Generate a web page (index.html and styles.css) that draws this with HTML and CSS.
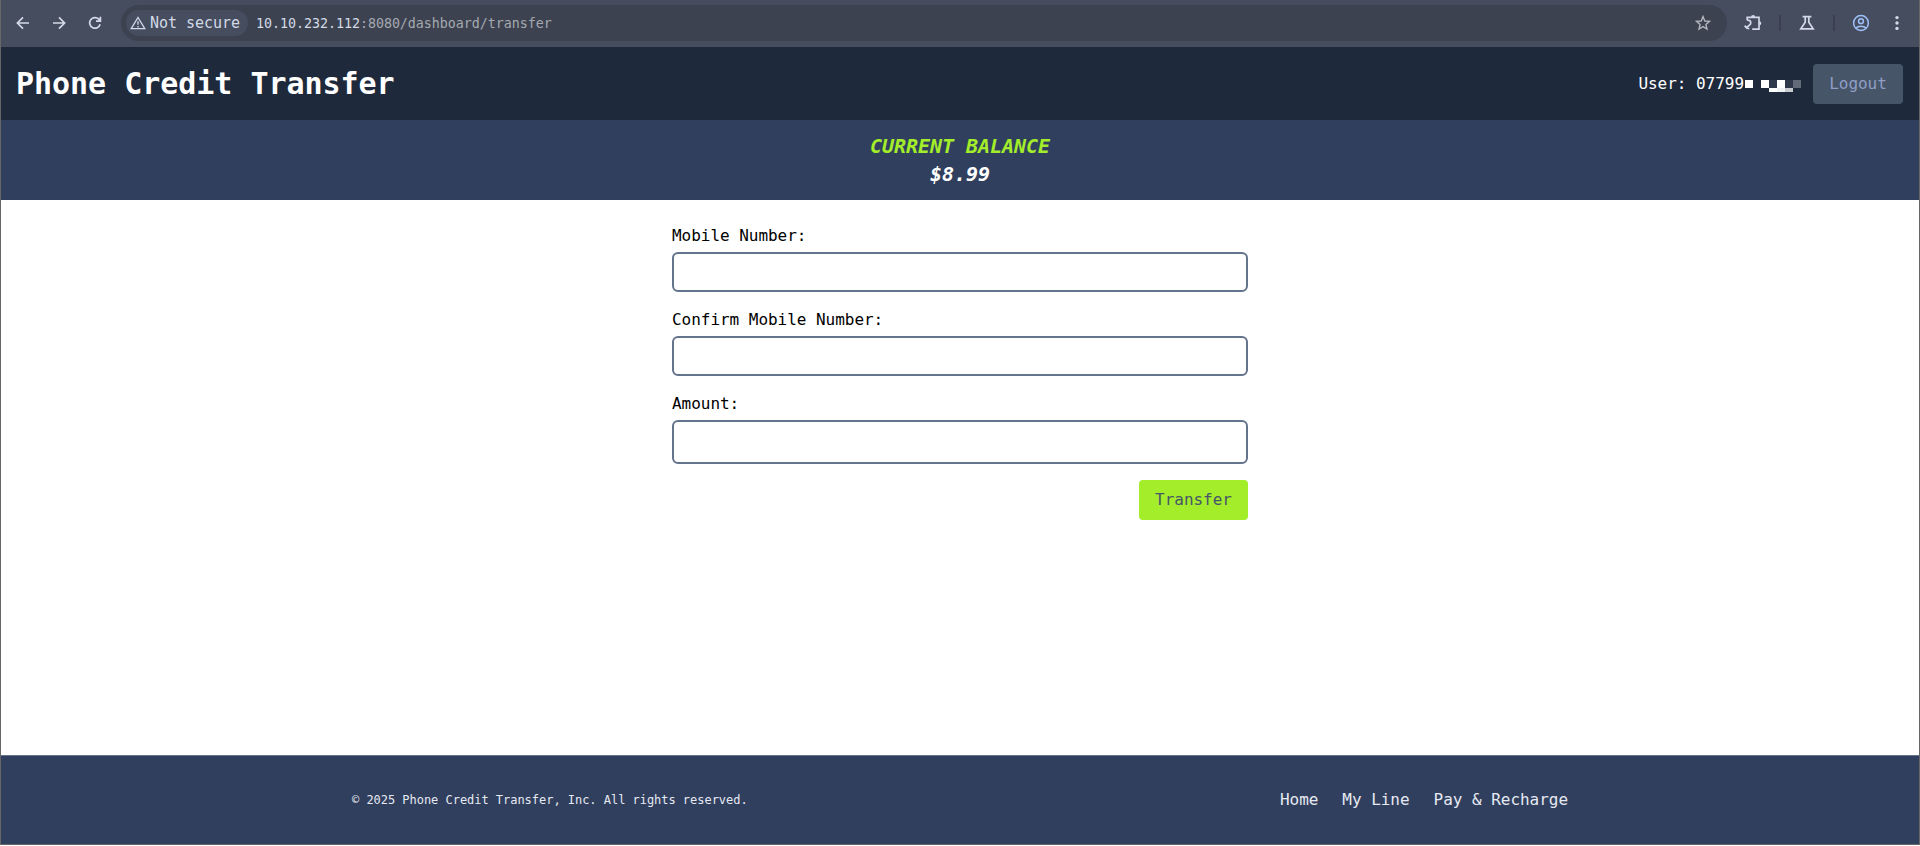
FILE: index.html
```html
<!DOCTYPE html>
<html lang="en">
<head>
<meta charset="utf-8">
<title>Phone Credit Transfer</title>
<link rel="stylesheet" href="styles.css">
</head>
<body>
<div class="window">
  <div class="toolbar">
    <div class="nav-icons">
      <svg class="icon" viewBox="0 0 18 18"><path d="M15 9H3.8M9 3.4 3.4 9 9 14.6"/></svg>
      <svg class="icon" viewBox="0 0 18 18"><path d="M3 9h11.2M9 3.4 14.6 9 9 14.6"/></svg>
      <svg class="icon" viewBox="0 0 18 18"><path d="M14.1 10.2A5.3 5.3 0 1 1 12.8 5.2L14.4 6.8M14.4 2.8V7.2H10"/></svg>
    </div>
    <div class="address">
      <div class="security">
        <svg class="warning" viewBox="0 0 16 14"><path d="M8 1.5 14.8 12.7H1.2Z"/><path d="M8 5.2v3.6M8 10v1.4"/></svg>
        <span>Not secure</span>
      </div>
      <div class="url"><span class="host">10.10.232.112</span>:8080/dashboard/transfer</div>
      <svg class="star" viewBox="0 0 16 16"><path d="M8 1.6 9.8 6l4.7.4-3.6 3.1 1.1 4.6L8 11.6l-4 2.5 1.1-4.6L1.5 6.4 6.2 6Z"/></svg>
    </div>
    <div class="actions">
      <svg class="puzzle" viewBox="0 0 18 18"><path d="M3.2 6.2V3.4H15V15.2H8.2M3.2 6.2C7.2 6.2 7.8 9.4 5.4 11.2L2.6 13.6M.7 11.6l1.9 2.4 2.6.8"/><path class="solid" d="M7 3.2a2.1 2.1 0 0 1 4.2 0ZM15.2 7.2a2.1 2.1 0 0 1 0 4.2Z"/></svg>
      <i class="divider"></i>
      <svg class="flask" viewBox="0 0 16 16"><path d="M3.6 1.7h8.8M6.2 2v5.2L1.8 13.9h12.4L9.8 7.2V2"/></svg>
      <i class="divider"></i>
      <svg class="profile" viewBox="0 0 18 18"><circle cx="9" cy="9" r="7.4"/><circle cx="9" cy="7.2" r="2.4"/><path d="M3.8 14c2.8-2.5 7.6-2.5 10.4 0"/></svg>
      <svg class="dots" viewBox="0 0 4 16"><circle cx="2" cy="2.6" r="1.7"/><circle cx="2" cy="8" r="1.7"/><circle cx="2" cy="13.4" r="1.7"/></svg>
    </div>
  </div>

  <header class="header">
    <h1 class="title">Phone Credit Transfer</h1>
    <div class="account">
      <span>User: 07799</span>
      <svg class="redaction" viewBox="0 0 57 12" shape-rendering="crispEdges"><path fill="#fff" d="M1 0h8v8H1zM17 0h8v8h-8zM33 0h8v8h-8zM25 8h8v4h-8z"/><path fill="#2e384a" d="M25 0h8v8h-8zM41 0h8v8h-8z"/><path fill="#f0f1f2" d="M33 8h8v4h-8z"/><path fill="#c8cbd0" d="M41 8h8v4h-8z"/><path fill="#646b78" d="M49 0h8v8h-8z"/></svg>
      <button class="logout">Logout</button>
    </div>
  </header>

  <section class="balance">
    <div class="balance-label">CURRENT BALANCE</div>
    <div>$8.99</div>
  </section>

  <main class="main">
    <form class="form">
      <label class="field">Mobile Number:<input class="input" type="text"></label>
      <label class="field">Confirm Mobile Number:<input class="input" type="text"></label>
      <label class="field">Amount:<input class="input amount" type="text"></label>
      <button class="submit" type="button">Transfer</button>
    </form>
  </main>

  <footer class="footer">
    <div class="footer-inner">
      <span class="copyright">© 2025 Phone Credit Transfer, Inc. All rights reserved.</span>
      <nav class="links"><a>Home</a><a>My Line</a><a>Pay &amp; Recharge</a></nav>
    </div>
  </footer>
</div>
</body>
</html>
```
FILE: styles.css
```css
* { box-sizing: border-box; }
body {
  margin: 0;
  background: #fff;
  font: 16px/24px "DejaVu Sans Mono", monospace;
  letter-spacing: -0.002em;
  overflow: hidden;
}
button, input { font: inherit; letter-spacing: inherit; }
svg { display: block; flex: none; fill: none; stroke: #d3d9e6; stroke-width: 1.7; }

.window {
  display: flex;
  flex-direction: column;
  height: 845px;
  border: solid #666;
  border-width: 0 1px 1px;
}

.toolbar {
  display: flex;
  align-items: center;
  height: 47px;
  padding: 0 20px 1px 13px;
  background: #454d5f;
}
.nav-icons { display: flex; gap: 18px; width: 107px; }
.icon { width: 18px; height: 18px; }
.address {
  display: flex;
  align-items: center;
  flex: 1;
  height: 36px;
  padding: 0 16px 0 5px;
  border-radius: 18px;
  background: #3c4250;
}
.security {
  display: flex;
  align-items: center;
  gap: 4px;
  width: 122px;
  height: 26px;
  padding-left: 4px;
  border-radius: 13px;
  background: #454d5f;
  color: #d3d9e6;
  font-size: 15px;
  white-space: nowrap;
}
.warning { width: 16px; height: 14px; stroke-width: 1.3; }
.url { flex: 1; margin-left: 8px; padding-top: 2px; color: #a6a9b0; font-size: 13.33px; }
.host { color: #d3d9e6; }
.star { width: 16px; height: 16px; stroke: #b0b4bd; stroke-width: 1.4; }
.actions { display: flex; align-items: center; margin-left: 17px; }
.puzzle { width: 18px; height: 18px; margin-top: -1px; }
.solid { fill: #d3d9e6; stroke: none; }
.divider { width: 2px; height: 16px; background: #3a4050; }
.puzzle + .divider { margin: 0 18px 0 17px; }
.flask { width: 16px; height: 16px; }
.flask + .divider { margin: 0 17px 0 18px; }
.profile { width: 18px; height: 18px; stroke: #a0c1fa; stroke-width: 1.5; }
.dots { width: 4px; height: 16px; margin-left: 25px; fill: #d3d9e6; stroke: none; }

.header {
  display: flex;
  align-items: center;
  justify-content: space-between;
  height: 73px;
  padding: 0 16px 0 15px;
  background: #1e293b;
  color: #fff;
}
.title { margin: 0; padding-top: 1px; font-size: 30px; line-height: 36px; }
.account { display: flex; align-items: center; }
.redaction { width: 57px; height: 12px; margin-top: 4px; stroke: none; }
.logout, .submit {
  height: 40px;
  padding: 8px 16px;
  border: 0;
  border-radius: 4px;
}
.logout { width: 90px; margin-left: 12px; background: #475569; color: #909dc6; }

.balance {
  height: 80px;
  padding-top: 12px;
  background: #313f5e;
  color: #fff;
  font-size: 20px;
  font-style: italic;
  font-weight: bold;
  line-height: 28px;
  text-align: center;
}
.balance-label { color: #a3ed2a; }

.main { flex: 1; padding-top: 24px; }
.form { display: flex; flex-direction: column; gap: 16px; width: 576px; margin: 0 auto; }
.field { display: flex; flex-direction: column; gap: 4px; color: #000; }
.input {
  height: 40px;
  padding: 8px;
  border: 2px solid #64748b;
  border-radius: 6px;
  background: #fff;
}
.amount { height: 44px; }
.submit { align-self: flex-end; width: 109px; background: #a3ed2a; color: #475569; }

.footer { height: 89px; border-top: 1px solid #64748b; background: #313f5e; color: #e5e9f2; }
.footer-inner {
  display: flex;
  align-items: center;
  justify-content: space-between;
  width: 1216px;
  height: 88px;
  margin: 0 auto;
}
.copyright { font-size: 12px; }
.links { display: flex; gap: 24px; }
```
